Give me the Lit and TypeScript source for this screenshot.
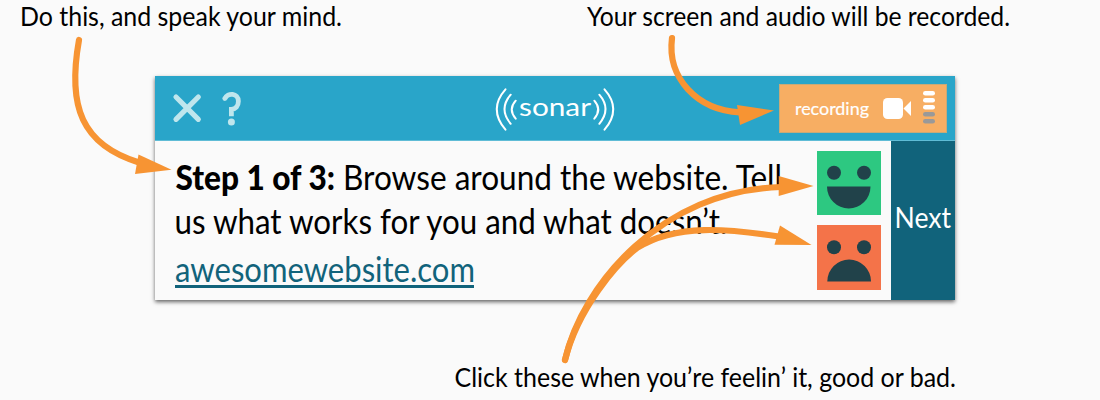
import { LitElement, html, svg, css } from "lit";
import { customElement } from "lit/decorators.js";

interface Run {
  text: string;
  x: number;
  width: number;
  bold?: boolean;
}

/** One line of type whose runs are fitted to fixed widths. */
const line = (cls: string, w: number, h: number, base: number, runs: Run[]) => html`
  <svg class="line ${cls}" width=${w} height=${h} viewBox="0 0 ${w} ${h}">
    ${runs.map(
      (r) => svg`<text class=${r.bold ? "bold" : "regular"} x=${r.x} y=${base}
        textLength=${r.width} lengthAdjust="spacingAndGlyphs">${r.text}</text>`
    )}
  </svg>`;

@customElement("sonar-bar")
class SonarBar extends LitElement {
  static styles = css`
    :host { display: flex; height: 64px; box-sizing: content-box; background: #29a5c9; border-bottom: 1px solid #5fbcd6; justify-content: space-between; font-family: Lato, sans-serif; }
    svg { display: block; overflow: visible; }
    .tools { display: flex; width: 340px; padding: 17px 0 0 17px; box-sizing: border-box; gap: 18px; }
    .logo { padding-top: 10px; }
    .word { font-size: 25px; fill: #fff; }
    .right { width: 340px; display: flex; justify-content: flex-end; box-sizing: border-box; padding: 8px 8px 0 0; }
    .rec { width: 168px; height: 49px; box-sizing: border-box; background: #f7ae63; border: 1px solid #c7aa78; display: flex; align-items: flex-start; }
    .reclabel { font-size: 18px; fill: #fff; stroke: #fff; stroke-width: .2px; margin-left: 15px; }
    .cam { margin: 13px 0 0 13px; }
    .meter { margin: 6px 0 0 12px; }
  `;
  render() {
    return html`
      <div class="tools">
        <svg width="30" height="30" viewBox="0 0 30 30" fill="none" stroke="#bfe6ed" stroke-width="5.2" stroke-linecap="round">
          <path d="M4 4L26.3 26.3M26.3 4L4 26.3"></path>
        </svg>
        <svg width="24" height="36" viewBox="0 0 24 36">
          <path d="M4.8 5.8C7.5 -.8 18.4 -.2 18.4 8.2C18.4 13.2 15.5 16 11.4 16.3V23.3" fill="none" stroke="#bfe6ed" stroke-width="4.8"></path>
          <circle cx="4.8" cy="5.6" r="2.4" fill="#bfe6ed"></circle>
          <circle cx="11.4" cy="29" r="3.5" fill="#bfe6ed"></circle>
        </svg>
      </div>
      <div class="logo">
        <svg width="120" height="46" viewBox="495 86 120 46">
          <g fill="none" stroke="#fff" stroke-width="2" stroke-linecap="round">
            <path d="M505.5 89.3Q488 109 505.5 129.7"></path>
            <path d="M510.7 94.7Q498.3 109 510.7 123.8"></path>
            <path d="M515.7 100.7Q507.8 109.5 515.7 118.7"></path>
            <path d="M604.5 89.3Q622 109 604.5 129.7"></path>
            <path d="M599.3 94.7Q611.7 109 599.3 123.8"></path>
            <path d="M594.3 100.7Q602.2 109.5 594.3 118.7"></path>
          </g>
          <text class="word" x="519" y="115.7" textLength="72" lengthAdjust="spacingAndGlyphs">sonar</text>
        </svg>
      </div>
      <div class="right">
        <div class="rec">
          ${line("reclabel", 75, 47, 29.8, [{ text: "recording", x: 0, width: 74 }])}
          <svg class="cam" width="28" height="21" viewBox="0 0 28 21" fill="#fff">
            <rect width="20" height="21" rx="4.5"></rect>
            <path d="M28 3V18L20.5 10.5Z"></path>
          </svg>
          <svg class="meter" width="12" height="34" viewBox="0 0 12 34">
            ${[0, 1, 2, 3, 4].map((i) => svg`<rect y=${i * 7} width="12" height="4.6" rx="2.3" fill=${i > 2 ? "#999" : "#fff"}></rect>`)}
          </svg>
        </div>
      </div>`;
  }
}

@customElement("mood-face")
class MoodFace extends LitElement {
  static properties = { mood: { type: String } };
  declare mood: string;
  static styles = css`
    :host { display: block; width: 64px; height: 64px; }
    svg { display: block; }
    .good { background: #2dc881; }
    .bad { background: #f47349; height: 65px; }
  `;
  render() {
    const good = this.mood === "good";
    return html`<svg class=${good ? "good" : "bad"} width="64" height="64" viewBox="0 0 64 64" fill="#21424a">
      <circle cx="17" cy="21.7" r="7"></circle>
      <circle cx="47" cy="21.7" r="7"></circle>
      <path d=${good ? "M10 35.5H53.5A21.75 22 0 0 1 10 35.5Z" : "M10.3 56H54A21.85 22 0 0 0 10.3 56Z"}></path>
    </svg>`;
  }
}

@customElement("app-root")
class AppRoot extends LitElement {
  static styles = css`
    :host { display: block; position: relative; width: 1100px; height: 400px; overflow: hidden; background: #fafafa; font-family: Lato, sans-serif; color: #000; }
    .line { display: block; overflow: visible; }
    .bold { font-weight: 900; }
    .notes { display: flex; height: 76px; }
    .note { font-size: 26.6px; }
    .card { width: 800px; height: 224px; margin-left: 155px; background: #fafafa; box-shadow: 0 2px 4px rgba(0, 0, 0, .6); }
    .content { display: flex; height: 159px; }
    .copy { width: 662px; }
    .step { font-size: 34.8px; }
    .link { font-size: 34.5px; fill: #11637b; margin-left: 20px; width: 299px; border-bottom: 3px solid #11637b; }
    .faces { width: 74px; display: flex; flex-direction: column; gap: 10px; padding-top: 10px; }
    .next { width: 64px; background: #11637b; font-size: 28px; fill: #fff; }
    .bottom { height: 100px; }
    .arrows { position: absolute; left: 0; top: 0; }
  `;
  render() {
    return html`
      <div class="notes">
        ${line("note", 550, 76, 26, [{ text: "Do this, and speak your mind.", x: 20, width: 322 }])}
        ${line("note", 550, 76, 26, [{ text: "Your screen and audio will be recorded.", x: 37, width: 423 }])}
      </div>
      <div class="card">
        <sonar-bar></sonar-bar>
        <div class="content">
          <div class="copy">
            ${line("step", 662, 70, 48.5, [
              { text: "Step 1 of 3:", x: 20.5, width: 159.5, bold: true },
              { text: "Browse around the website. Tell", x: 188, width: 439 },
            ])}
            ${line("step", 662, 44, 23, [{ text: "us what works for you and what doesn’t.", x: 19.5, width: 553 }])}
            ${line("link", 299, 30, 27, [{ text: "awesomewebsite.com", x: 0, width: 300 }])}
          </div>
          <div class="faces">
            <mood-face mood="good"></mood-face>
            <mood-face mood="bad"></mood-face>
          </div>
          ${line("next", 64, 159, 86.5, [{ text: "Next", x: 3.5, width: 56.5 }])}
        </div>
      </div>
      ${line("note bottom", 1100, 100, 86.6, [{ text: "Click these when you’re feelin’ it, good or bad.", x: 454.5, width: 501.5 }])}
      <svg class="arrows" width="1100" height="400" viewBox="0 0 1100 400">
        <g fill="none" stroke="#f79433" stroke-width="6.2" stroke-linecap="round">
          <path d="M79 40C67 107 82 145 139 162.5"></path>
          <path d="M672 38C667 78 697 110 740 112.3"></path>
          <path d="M565 360C582 285 662 190 781 187"></path>
          <path d="M565 360C578 308 617 263 637 248C676 223 730 229 779 236.5"></path>
        </g>
        <g fill="#f79433">
          <path d="M138.5 154.5L171.5 169.7L135 174Z"></path>
          <path d="M737 105L774 110.5L740 125Z"></path>
          <path d="M778.7 176L813.5 186L778.7 196Z"></path>
          <path d="M780 225.5L811.5 245L774.5 244.7Z"></path>
        </g>
      </svg>`;
  }
}
